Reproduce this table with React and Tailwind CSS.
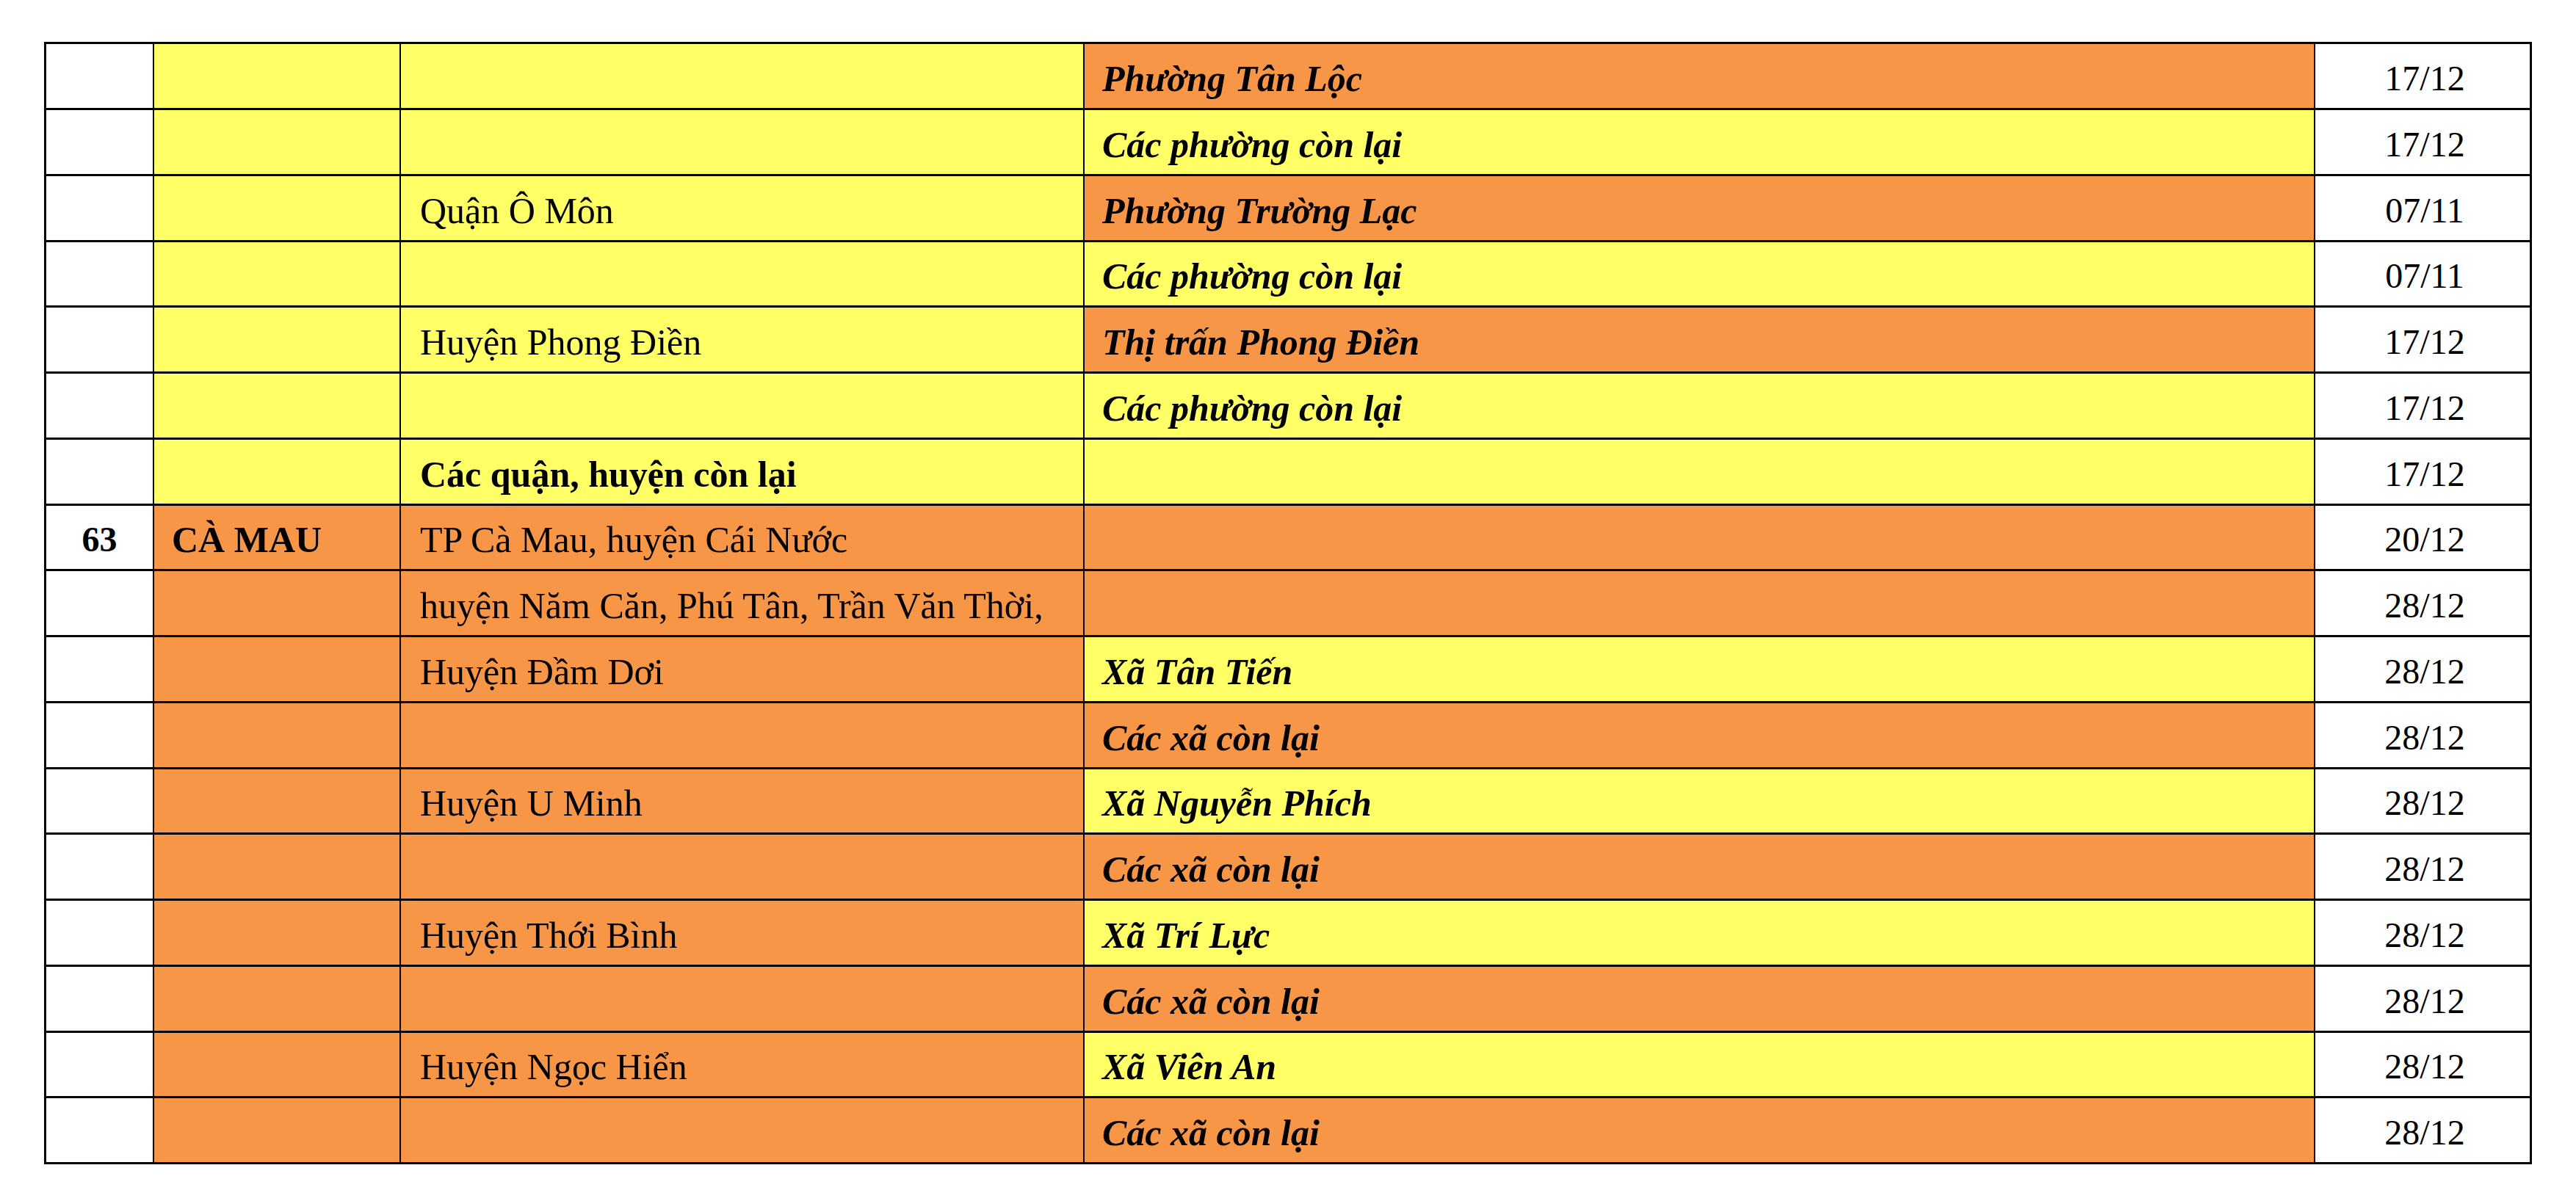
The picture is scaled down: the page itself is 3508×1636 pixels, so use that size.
const Y = "bg-[#ffff66]";
const O = "bg-[#f79646]";

const rows = [
  { c2: Y, c3: Y, c4: O, d: "", t: "Phường Tân Lộc", date: "17/12" },
  { c2: Y, c3: Y, c4: Y, d: "", t: "Các phường còn lại", date: "17/12" },
  { c2: Y, c3: Y, c4: O, d: "Quận Ô Môn", t: "Phường Trường Lạc", date: "07/11" },
  { c2: Y, c3: Y, c4: Y, d: "", t: "Các phường còn lại", date: "07/11" },
  { c2: Y, c3: Y, c4: O, d: "Huyện Phong Điền", t: "Thị trấn Phong Điền", date: "17/12" },
  { c2: Y, c3: Y, c4: Y, d: "", t: "Các phường còn lại", date: "17/12" },
  { c2: Y, c3: Y, c4: Y, d: "Các quận, huyện còn lại", bold: true, t: "", date: "17/12" },
  { no: "63", p: "CÀ MAU", c2: O, c3: O, c4: O, d: "TP Cà Mau, huyện Cái Nước", t: "", date: "20/12" },
  { c2: O, c3: O, c4: O, d: "huyện Năm Căn, Phú Tân, Trần Văn Thời,", t: "", date: "28/12" },
  { c2: O, c3: O, c4: Y, d: "Huyện Đầm Dơi", t: "Xã Tân Tiến", date: "28/12" },
  { c2: O, c3: O, c4: O, d: "", t: "Các xã còn lại", date: "28/12" },
  { c2: O, c3: O, c4: Y, d: "Huyện U Minh", t: "Xã Nguyễn Phích", date: "28/12" },
  { c2: O, c3: O, c4: O, d: "", t: "Các xã còn lại", date: "28/12" },
  { c2: O, c3: O, c4: Y, d: "Huyện Thới Bình", t: "Xã Trí Lực", date: "28/12" },
  { c2: O, c3: O, c4: O, d: "", t: "Các xã còn lại", date: "28/12" },
  { c2: O, c3: O, c4: Y, d: "Huyện Ngọc Hiển", t: "Xã Viên An", date: "28/12" },
  { c2: O, c3: O, c4: O, d: "", t: "Các xã còn lại", date: "28/12" },
];

const cell = "flex items-center h-full border-r-2 border-b-[3px] border-black pt-[6px]";

export default function App() {
  return (
    <div className="min-h-screen bg-white pt-[57px] pl-[60px] font-['Liberation_Serif',serif] text-[48px] text-black leading-none">
      <div className="w-[3388px] border-t-[3px] border-l-[3px] border-black">
        {rows.map((r, i) => (
          <div
            key={i}
            className={`grid grid-cols-[147px_336px_931px_1676px_295px] ${i % 4 === 3 ? "h-[89px]" : "h-[90px]"}`}
          >
            <div className={`${cell} justify-center bg-white font-bold`}>{r.no}</div>
            <div className={`${cell} ${r.c2} pl-[24px] font-bold text-[50px]`}>{r.p}</div>
            <div className={`${cell} ${r.c3} pl-[26px] text-[50px] ${r.bold ? "font-bold" : ""}`}>{r.d}</div>
            <div className={`${cell} ${r.c4} pl-[24px] font-bold italic text-[50px]`}>{r.t}</div>
            <div className={`${cell} justify-center bg-white border-r-[3px] pl-[6px]`}>{r.date}</div>
          </div>
        ))}
      </div>
    </div>
  );
}
